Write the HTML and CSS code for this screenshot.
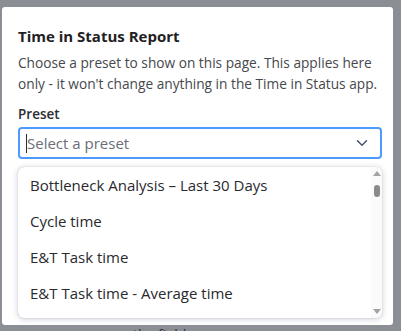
FILE: index.html
```html
<!DOCTYPE html>
<html lang="en">
<head>
    <meta charset="UTF-8">
    <meta name="viewport" content="width=device-width, initial-scale=1.0">
    <title>Time in Status Report</title>
    <link rel="stylesheet" href="styles.css">
</head>
<body>

    <div class="dialog">
        <h2 class="titulo">Time in Status Report</h2>
        <p class="desc">Choose a preset to show on this page. This applies here only - it won't change anything in the Time in Status app.</p>

        <label class="etiqueta">Preset</label>
        <div class="select">
            <span class="caret"></span>
            <span class="placeholder">Select a preset</span>
            <svg class="chevron" width="12" height="8" viewBox="0 0 12 8">
                <path d="M1.5 1.8 L6 6.2 L10.5 1.8" fill="none" stroke="#44546f" stroke-width="1.5" stroke-linecap="round" stroke-linejoin="round"/>
            </svg>
        </div>

        <div class="menu">
            <ul class="opciones">
                <li>Bottleneck Analysis – Last 30 Days</li>
                <li>Cycle time</li>
                <li>E&amp;T Task time</li>
                <li>E&amp;T Task time - Average time</li>
                <li>Lead time</li>
            </ul>
            <div class="scroll">
                <span class="flecha arriba"></span>
                <span class="thumb"></span>
                <span class="relleno"></span>
                <span class="flecha abajo"></span>
            </div>
        </div>
    </div>

    <p class="fondo">the field</p>

</body>
</html>
```

FILE: styles.css
```css
body {
    margin: 0;
    padding: 0;
    width: 401px;
    height: 331px;
    overflow: hidden;
    background-color: #8b8e94;
    font-family: "Open Sans", "Noto Sans", Arial, sans-serif;
}

.dialog {
    width: 391px;
    height: 318px;
    margin: 7px 0 0 2px;
    box-sizing: border-box;
    padding: 18px 11px 0 16px;
    background-color: #ffffff;
    border-radius: 3px;
    overflow: hidden;
}

.titulo {
    margin: 0;
    font-size: 15px;
    line-height: 22px;
    font-weight: 700;
    color: #1f2124;
}

.desc {
    margin: 5px -12px 0 0;
    font-size: 13.7px;
    line-height: 21px;
    color: #46484c;
}

.etiqueta {
    display: block;
    margin-top: 10px;
    font-size: 13.5px;
    line-height: 20px;
    font-weight: 600;
    color: #2c2e32;
}

.select {
    margin-top: 3px;
    height: 32px;
    box-sizing: border-box;
    border: 2px solid #4c9aff;
    border-radius: 4px;
    display: flex;
    align-items: center;
    padding: 0 12px 0 6px;
}

.caret {
    width: 1px;
    height: 19px;
    background-color: #2c2e32;
}

.placeholder {
    flex: 1;
    font-size: 15px;
    color: #6b6e76;
}

.chevron {
    display: block;
}

.menu {
    margin: 8px 0 0 0;
    height: 151px;
    background-color: #ffffff;
    border-radius: 6px;
    box-shadow: 0 1px 6px rgba(9, 30, 66, 0.22), 0 0 1px rgba(9, 30, 66, 0.3);
    display: flex;
    overflow: hidden;
}

.opciones {
    flex: 1;
    list-style: none;
    margin: 0;
    padding: 0;
    overflow: hidden;
}

.opciones li {
    height: 36px;
    line-height: 36px;
    padding-left: 12px;
    font-size: 15px;
    color: #292a2e;
    white-space: nowrap;
}

.scroll {
    width: 11px;
    display: flex;
    flex-direction: column;
    align-items: center;
    padding: 4px 0 4px 0;
    background-color: #fafafa;
}

.flecha {
    width: 0;
    height: 0;
    border-left: 4px solid transparent;
    border-right: 4px solid transparent;
}

.arriba {
    border-bottom: 5px solid #a3a3a3;
}

.abajo {
    border-top: 5px solid #a3a3a3;
}

.thumb {
    margin-top: 9px;
    width: 6px;
    height: 12px;
    border-radius: 3px;
    background-color: #8a8a8a;
}

.relleno {
    flex: 1;
}

.fondo {
    margin: 0;
    padding: 3px 0 0 133px;
    font-size: 14px;
    line-height: 14px;
    color: #2f3135;
}
```
